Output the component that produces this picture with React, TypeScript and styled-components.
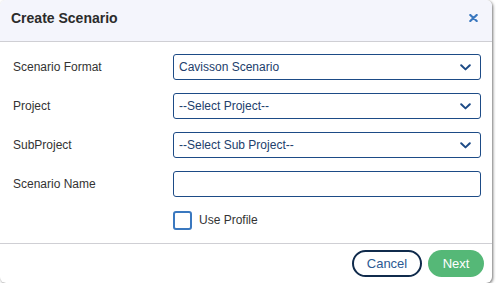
import React, { useState } from 'react';
import styled, { createGlobalStyle } from 'styled-components';

const GlobalStyle = createGlobalStyle`
  html, body {
    margin: 0;
    padding: 0;
    background: #ffffff;
    font-family: "Liberation Sans", Arial, sans-serif;
  }
`;

const Dialog = styled.div`
  width: 492px;
  height: 283px;
  background: #ffffff;
  border-radius: 6px;
  box-shadow: 1px 1px 3px rgba(0, 0, 0, 0.55);
  display: flex;
  flex-direction: column;
  overflow: hidden;
`;

const Header = styled.div`
  height: 42px;
  background-color: #f4f5fc;
  border-bottom: 1px solid #cfcfd4;
  display: flex;
  align-items: center;
  justify-content: space-between;
  padding: 0 14px 6px 11px;
  box-sizing: border-box;
  flex-shrink: 0;
`;

const Title = styled.div`
  font-size: 14px;
  font-weight: 700;
  color: #2b2b2b;
`;

const CloseButton = styled.button`
  background: none;
  border: none;
  padding: 0;
  width: 10px;
  height: 10px;
  display: flex;
  align-items: center;
  justify-content: center;
  cursor: pointer;
`;

const Body = styled.div`
  flex: 1;
  padding: 12px 11px 0 13px;
  display: flex;
  flex-direction: column;
  gap: 13px;
`;

const Row = styled.div`
  display: flex;
  align-items: center;
  height: 26px;
`;

const Label = styled.label`
  width: 160px;
  font-size: 12px;
  color: #333333;
  flex-shrink: 0;
`;

const SelectBox = styled.div`
  width: 308px;
  height: 26px;
  box-sizing: border-box;
  border: 1px solid #1d4b86;
  border-radius: 3px;
  display: flex;
  align-items: center;
  justify-content: space-between;
  padding: 0 9px 0 5px;
  font-size: 12px;
  color: #22406c;
  cursor: pointer;
`;

const TextInput = styled.input`
  width: 308px;
  height: 26px;
  box-sizing: border-box;
  border: 1px solid #1d4b86;
  border-radius: 3px;
  padding: 0 5px;
  font-size: 12px;
  font-family: inherit;
  color: #22406c;
  outline: none;
`;

const CheckRow = styled.div`
  display: flex;
  align-items: center;
  padding-left: 160px;
  height: 20px;
`;

const CheckBox = styled.span<{ $checked: boolean }>`
  width: 19px;
  height: 19px;
  box-sizing: border-box;
  border: 2px solid #3a78bf;
  border-radius: 3px;
  background: ${(p) => (p.$checked ? '#3a78bf' : '#ffffff')};
  margin-right: 7px;
  cursor: pointer;
`;

const CheckLabel = styled.span`
  font-size: 12px;
  color: #333333;
`;

const Footer = styled.div`
  height: 40px;
  border-top: 1px solid #cfcfd4;
  display: flex;
  align-items: center;
  justify-content: flex-end;
  gap: 6px;
  padding-right: 8px;
  box-sizing: border-box;
  flex-shrink: 0;
`;

const PillButton = styled.button<{ $primary?: boolean }>`
  height: 27px;
  border-radius: 14px;
  font-family: inherit;
  font-size: 13px;
  cursor: pointer;
  box-sizing: border-box;
  padding: 0;
  border: ${(p) => (p.$primary ? 'none' : '2px solid #102b4c')};
  background: ${(p) => (p.$primary ? '#55b877' : '#ffffff')};
  color: ${(p) => (p.$primary ? '#ffffff' : '#2b5a93')};
  width: ${(p) => (p.$primary ? '56px' : '70px')};
`;

const Chevron = () => (
  <svg width="11" height="7" viewBox="0 0 11 7">
    <path d="M1.2 1.2 L5.5 5.4 L9.8 1.2" fill="none" stroke="#1d4b86" strokeWidth="2" strokeLinecap="round" strokeLinejoin="round" />
  </svg>
);

const Select: React.FC<{ value: string }> = ({ value }) => (
  <SelectBox>
    <span>{value}</span>
    <Chevron />
  </SelectBox>
);

const App: React.FC = () => {
  const [useProfile, setUseProfile] = useState(false);
  const [name, setName] = useState('');

  return (
    <>
      <GlobalStyle />
      <Dialog>
        <Header>
          <Title>Create Scenario</Title>
          <CloseButton aria-label="close">
            <svg width="9" height="8" viewBox="0 0 9 8">
              <path d="M1.3 1 L7.7 7 M7.7 1 L1.3 7" stroke="#3a78bf" strokeWidth="2.2" strokeLinecap="round" />
            </svg>
          </CloseButton>
        </Header>
        <Body>
          <Row>
            <Label>Scenario Format</Label>
            <Select value="Cavisson Scenario" />
          </Row>
          <Row>
            <Label>Project</Label>
            <Select value="--Select Project--" />
          </Row>
          <Row>
            <Label>SubProject</Label>
            <Select value="--Select Sub Project--" />
          </Row>
          <Row>
            <Label>Scenario Name</Label>
            <TextInput value={name} onChange={(e) => setName(e.target.value)} />
          </Row>
          <CheckRow>
            <CheckBox $checked={useProfile} onClick={() => setUseProfile(!useProfile)} />
            <CheckLabel>Use Profile</CheckLabel>
          </CheckRow>
        </Body>
        <Footer>
          <PillButton>Cancel</PillButton>
          <PillButton $primary>Next</PillButton>
        </Footer>
      </Dialog>
    </>
  );
};

export default App;
